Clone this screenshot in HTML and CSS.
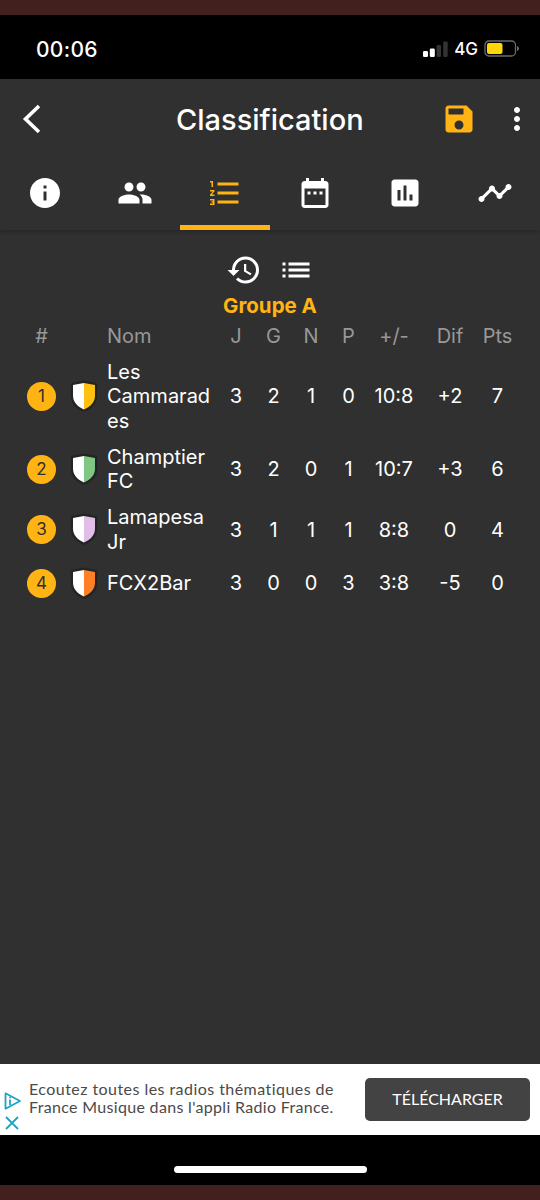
FILE: index.html
```html
<!DOCTYPE html>
<html lang="fr">
<head>
    <meta charset="UTF-8">
    <meta name="viewport" content="width=device-width, initial-scale=1.0">
    <title>Classification</title>
    <link rel="stylesheet" href="styles.css">
</head>
<body>
    <svg width="0" height="0" class="defs">
        <symbol id="shield" viewBox="0 0 34 36">
            <path class="shield-edge" d="M17 4 28.300 6.200V17c0 6.500-4.300 11.500-11.300 14.300C10 28.500 5.700 23.500 5.700 17V6.200z"/>
            <path fill="#fff" d="M17 4 5.700 6.200V17c0 6.500 4.300 11.500 11.300 14.300z"/>
            <path fill="currentColor" d="M17 4 28.300 6.200V17c0 6.500-4.300 11.500-11.300 14.300z"/>
        </symbol>
    </svg>
    <div class="status-bar">
        <span class="time">00:06</span>
        <div class="status-icons">
            <svg width="26" height="16" viewBox="0 0 26 16">
                <rect x="0" y="10" width="5" height="6" rx="1.300" fill="#fff"/>
                <rect x="6.800" y="7.500" width="5" height="8.500" rx="1.300" fill="#fff"/>
                <rect x="13.600" y="4" width="4.500" height="12" rx="1.300" fill="#333"/>
                <rect x="20.200" y="0.500" width="4.500" height="15.500" rx="1.300" fill="#333"/>
            </svg>
            <span class="network">4G</span>
            <svg width="36" height="17" viewBox="0 0 36 17">
                <rect x="1" y="1" width="30.500" height="15" rx="4" fill="none" stroke="#6b6b6b" stroke-width="1.300"/>
                <rect x="3" y="3" width="15.500" height="11" rx="2" fill="#ffd60a"/>
                <path d="M33 6v5c1.300-.400 2-1.300 2-2.500S34.300 6.400 33 6z" fill="#6b6b6b"/>
            </svg>
        </div>
    </div>
    <header class="app-header">
        <div class="toolbar">
            <svg class="back" width="20" height="32" viewBox="0 0 20 32"><path d="M18 3 4.500 16 18 29" fill="none" stroke="#fff" stroke-width="3.600"/></svg>
            <h1>Classification</h1>
            <svg class="icon save" viewBox="0 0 24 24"><path d="M17 3H5c-1.110 0-2 .9-2 2v14c0 1.100.89 2 2 2h14c1.100 0 2-.9 2-2V7l-4-4zm-5 16c-1.660 0-3-1.340-3-3s1.340-3 3-3 3 1.340 3 3-1.340 3-3 3zm3-10H5V5h10v4z"/></svg>
            <svg class="icon more" viewBox="0 0 24 24"><path d="M12 8c1.100 0 2-.9 2-2s-.9-2-2-2-2 .9-2 2 .9 2 2 2zm0 2c-1.100 0-2 .9-2 2s.9 2 2 2 2-.9 2-2-.9-2-2-2zm0 6c-1.100 0-2 .9-2 2s.9 2 2 2 2-.9 2-2-.9-2-2-2z"/></svg>
        </div>
        <nav class="tabs">
            <div class="tab"><svg class="icon" viewBox="0 0 24 24"><path d="M12 2C6.480 2 2 6.480 2 12s4.480 10 10 10 10-4.480 10-10S17.520 2 12 2zm1 15h-2v-6h2v6zm0-8h-2V7h2v2z"/></svg></div>
            <div class="tab"><svg class="icon" viewBox="0 0 24 24"><path d="M16 11c1.660 0 2.990-1.340 2.990-3S17.660 5 16 5c-1.660 0-3 1.340-3 3s1.340 3 3 3zm-8 0c1.660 0 2.990-1.340 2.990-3S9.660 5 8 5C6.340 5 5 6.340 5 8s1.340 3 3 3zm0 2c-2.330 0-7 1.170-7 3.500V19h14v-2.500c0-2.330-4.670-3.500-7-3.500zm8 0c-.29 0-.62.020-.97.050 1.160.84 1.970 1.970 1.970 3.450V19h6v-2.500c0-2.330-4.670-3.500-7-3.500z"/></svg></div>
            <div class="tab active"><svg class="icon" viewBox="0 0 24 24"><path d="M2 17h2v.5H3v1h1v.5H2v1h3v-4H2v1zm1-9h1V4H2v1h1v3zm-1 3h1.800L2 13.100v.9h3v-1H3.200L5 10.900V10H2v1zm5-6v2h14V5H7zm0 14h14v-2H7v2zm0-6h14v-2H7v2z"/></svg></div>
            <div class="tab"><svg class="icon" viewBox="0 0 24 24"><path d="M9 11H7v2h2v-2zm4 0h-2v2h2v-2zm4 0h-2v2h2v-2zm2-7h-1V2h-2v2H8V2H6v2H5c-1.110 0-1.990.9-1.990 2L3 20c0 1.100.89 2 2 2h14c1.100 0 2-.9 2-2V6c0-1.100-.9-2-2-2zm0 16H5V9h14v11z"/></svg></div>
            <div class="tab"><svg class="icon" viewBox="0 0 24 24"><path d="M19 3H5c-1.100 0-2 .9-2 2v14c0 1.100.9 2 2 2h14c1.100 0 2-.9 2-2V5c0-1.100-.9-2-2-2zM9 17H7v-7h2v7zm4 0h-2V7h2v10zm4 0h-2v-4h2v4z"/></svg></div>
            <div class="tab"><svg class="icon" viewBox="0 0 24 24"><path d="M23 8c0 1.100-.9 2-2 2-.18 0-.35-.02-.51-.07l-3.560 3.550c.05.16.07.34.07.52 0 1.100-.9 2-2 2s-2-.9-2-2c0-.18.02-.36.07-.52l-2.550-2.550c-.16.05-.34.07-.52.07s-.36-.02-.52-.07l-4.550 4.560c.05.16.07.33.07.51 0 1.100-.9 2-2 2s-2-.9-2-2 .9-2 2-2c.18 0 .35.02.51.07l4.560-4.550C8.020 9.360 8 9.180 8 9c0-1.100.9-2 2-2s2 .9 2 2c0 .18-.02.36-.07.52l2.550 2.550c.16-.05.34-.07.52-.07s.36.02.52.07l3.550-3.560C19.020 8.350 19 8.180 19 8c0-1.100.9-2 2-2s2 .9 2 2z"/></svg></div>
        </nav>
    </header>
    <main class="content">
        <div class="view-switch">
            <svg class="icon" viewBox="0 0 24 24"><path d="M13 3a9 9 0 0 0-9 9H1l3.890 3.890.07.14L9 12H6c0-3.870 3.130-7 7-7s7 3.130 7 7-3.130 7-7 7c-1.930 0-3.680-.79-4.940-2.060l-1.420 1.420A8.950 8.950 0 0 0 13 21a9 9 0 0 0 0-18zm-1 5v5l4.280 2.540.72-1.210-3.500-2.080V8H12z"/></svg>
            <svg class="icon" viewBox="0 0 24 24"><path d="M3 13h2v-2H3v2zm0 4h2v-2H3v2zm0-8h2V7H3v2zm4 4h14v-2H7v2zm0 4h14v-2H7v2zM7 7v2h14V7H7z"/></svg>
        </div>
        <h2>Groupe A</h2>
        <table class="standings">
            <colgroup>
                <col class="c-rank"><col class="c-badge"><col class="c-name">
                <col class="c-j"><col class="c-g"><col class="c-n"><col class="c-p">
                <col class="c-goals"><col class="c-dif"><col class="c-pts">
            </colgroup>
            <thead>
                <tr><th>#</th><th></th><th class="name">Nom</th><th>J</th><th>G</th><th>N</th><th>P</th><th>+/-</th><th>Dif</th><th>Pts</th></tr>
            </thead>
            <tbody>
                <tr>
                    <td><span class="rank">1</span></td>
                    <td><svg class="shield yellow"><use href="#shield"/></svg></td>
                    <td class="name">Les Cammarades</td>
                    <td>3</td><td>2</td><td>1</td><td>0</td><td>10:8</td><td>+2</td><td>7</td>
                </tr>
                <tr>
                    <td><span class="rank">2</span></td>
                    <td><svg class="shield green"><use href="#shield"/></svg></td>
                    <td class="name">Champtier FC</td>
                    <td>3</td><td>2</td><td>0</td><td>1</td><td>10:7</td><td>+3</td><td>6</td>
                </tr>
                <tr>
                    <td><span class="rank">3</span></td>
                    <td><svg class="shield purple"><use href="#shield"/></svg></td>
                    <td class="name">Lamapesa Jr</td>
                    <td>3</td><td>1</td><td>1</td><td>1</td><td>8:8</td><td>0</td><td>4</td>
                </tr>
                <tr>
                    <td><span class="rank">4</span></td>
                    <td><svg class="shield orange"><use href="#shield"/></svg></td>
                    <td class="name">FCX2Bar</td>
                    <td>3</td><td>0</td><td>0</td><td>3</td><td>3:8</td><td>-5</td><td>0</td>
                </tr>
            </tbody>
        </table>
    </main>
    <div class="ad">
        <div class="ad-marks">
            <svg width="18" height="18" viewBox="0 0 18 18" fill="none" stroke="#1fa3c4" stroke-width="1.800"><path d="M1.500 1.300 16 9 1.500 16.700z" stroke-linejoin="round"/><path d="M6 7.500v5.500M6 4.800v1.500"/></svg>
            <svg width="16" height="16" viewBox="0 0 16 16" fill="none" stroke="#1fa3c4" stroke-width="1.800"><path d="M2 2l12 12M14 2 2 14"/></svg>
        </div>
        <p>Ecoutez toutes les radios thématiques de<br><span class="line2">France Musique dans l'appli Radio France.</span></p>
        <div class="ad-button">TÉLÉCHARGER</div>
    </div>
    <div class="home-bar"><div class="home-indicator"></div></div>
</body>
</html>
```
FILE: styles.css
```css
:root {
    --bg-color: #303030;
    --accent: #ffb414;
    --frame: #41201d;
}
* {
    box-sizing: border-box;
}
body {
    display: flex;
    flex-direction: column;
    width: 540px;
    height: 1200px;
    margin: 0;
    border-top: 15px solid var(--frame);
    border-bottom: 15px solid var(--frame);
    background-color: var(--bg-color);
    color: #fff;
    font-family: Inter, "Liberation Sans", sans-serif;
    overflow: hidden;
}
svg {
    display: block;
    flex-shrink: 0;
}
.defs {
    position: absolute;
}
.icon {
    width: 36px;
    height: 36px;
    fill: currentColor;
}
.status-bar {
    display: flex;
    justify-content: space-between;
    height: 64px;
    padding: 0 20px 0 36px;
    align-items: center;
    background: #000;
}
.time {
    padding-top: 4px;
    font-size: 21px;
    font-weight: 500;
    letter-spacing: 0.3px;
}
.status-icons {
    display: flex;
    align-items: center;
    padding-top: 3px;
}
.network {
    margin: 0 6px 0 5px;
    font-size: 17px;
    font-weight: 500;
}
.app-header {
    height: 151px;
    box-shadow: 0 2px 4px rgba(0, 0, 0, 0.2);
}
.toolbar {
    display: flex;
    align-items: center;
    height: 76px;
    padding: 4px 5px 0 21px;
}
.toolbar h1 {
    margin: 0 0 0 135px;
    width: 190px;
    font-size: 29px;
    font-weight: 500;
    white-space: nowrap;
}
.save {
    margin-left: 75px;
    color: var(--accent);
}
.more {
    margin-left: 22px;
}
.tabs {
    display: flex;
    height: 75px;
}
.tab {
    display: flex;
    flex: 1;
    justify-content: center;
    align-items: center;
    border-bottom: 5px solid transparent;
    padding-top: 6px;
}
.tab.active {
    color: var(--accent);
    border-color: var(--accent);
}
.content {
    flex: 1;
    padding-top: 22px;
}
.view-switch {
    display: flex;
    justify-content: center;
    gap: 16px;
}
.content h2 {
    margin: 4px 0 0;
    color: var(--accent);
    font-size: 20.5px;
    font-weight: 700;
    line-height: 27px;
    text-align: center;
}
.standings {
    width: 496px;
    margin-left: 20px;
    table-layout: fixed;
    border-collapse: collapse;
    font-size: 20px;
    line-height: 24.3px;
}
.c-rank { width: 43px; }
.c-badge { width: 44px; }
.c-name { width: 110px; }
.c-j { width: 38px; }
.c-g { width: 37px; }
.c-n { width: 38px; }
.c-p { width: 37px; }
.c-goals { width: 54px; }
.c-dif { width: 58px; }
.c-pts { width: 37px; }
.standings th {
    height: 35px;
    padding: 0;
    color: #989898;
    font-weight: 400;
}
.standings td {
    padding: 6px 0;
    text-align: center;
    vertical-align: middle;
}
.standings .name {
    padding-right: 5px;
    text-align: left;
    overflow-wrap: anywhere;
}
.rank {
    display: block;
    width: 29px;
    height: 29px;
    margin: 0 auto;
    border-radius: 50%;
    background: var(--accent);
    color: #303030;
    font-size: 17px;
    line-height: 29px;
}
.shield {
    width: 34px;
    height: 35px;
    margin-left: 3.5px;
}
.shield-edge {
    fill: #222;
    stroke: #242424;
    stroke-width: 5px;
    stroke-linejoin: round;
}
.yellow { color: #ffc010; }
.green { color: #81c784; }
.purple { color: #e1bee7; }
.orange { color: #ff7f27; }
.ad {
    display: flex;
    align-items: center;
    height: 71px;
    padding-right: 10px;
    background: #fff;
    color: #4a4a4a;
}
.ad-marks {
    display: flex;
    flex-direction: column;
    gap: 5px;
    width: 29px;
    padding: 24px 0 0 4px;
}
.ad p {
    flex: 1;
    margin: 0;
    padding-bottom: 3px;
    font-family: Lato, sans-serif;
    font-size: 16px;
    line-height: 18px;
    letter-spacing: 0.45px;
    white-space: nowrap;
}
.ad .line2 {
    letter-spacing: 0.32px;
}
.ad-button {
    width: 165px;
    height: 43px;
    border-radius: 5px;
    background: #434343;
    color: #fff;
    font-family: Lato, sans-serif;
    font-size: 16px;
    line-height: 41px;
    text-align: center;
}
.home-bar {
    display: flex;
    justify-content: center;
    align-items: center;
    height: 50px;
    padding-top: 18px;
    background: #000;
}
.home-indicator {
    width: 193px;
    height: 7px;
    border-radius: 4px;
    background: #fff;
}
```
